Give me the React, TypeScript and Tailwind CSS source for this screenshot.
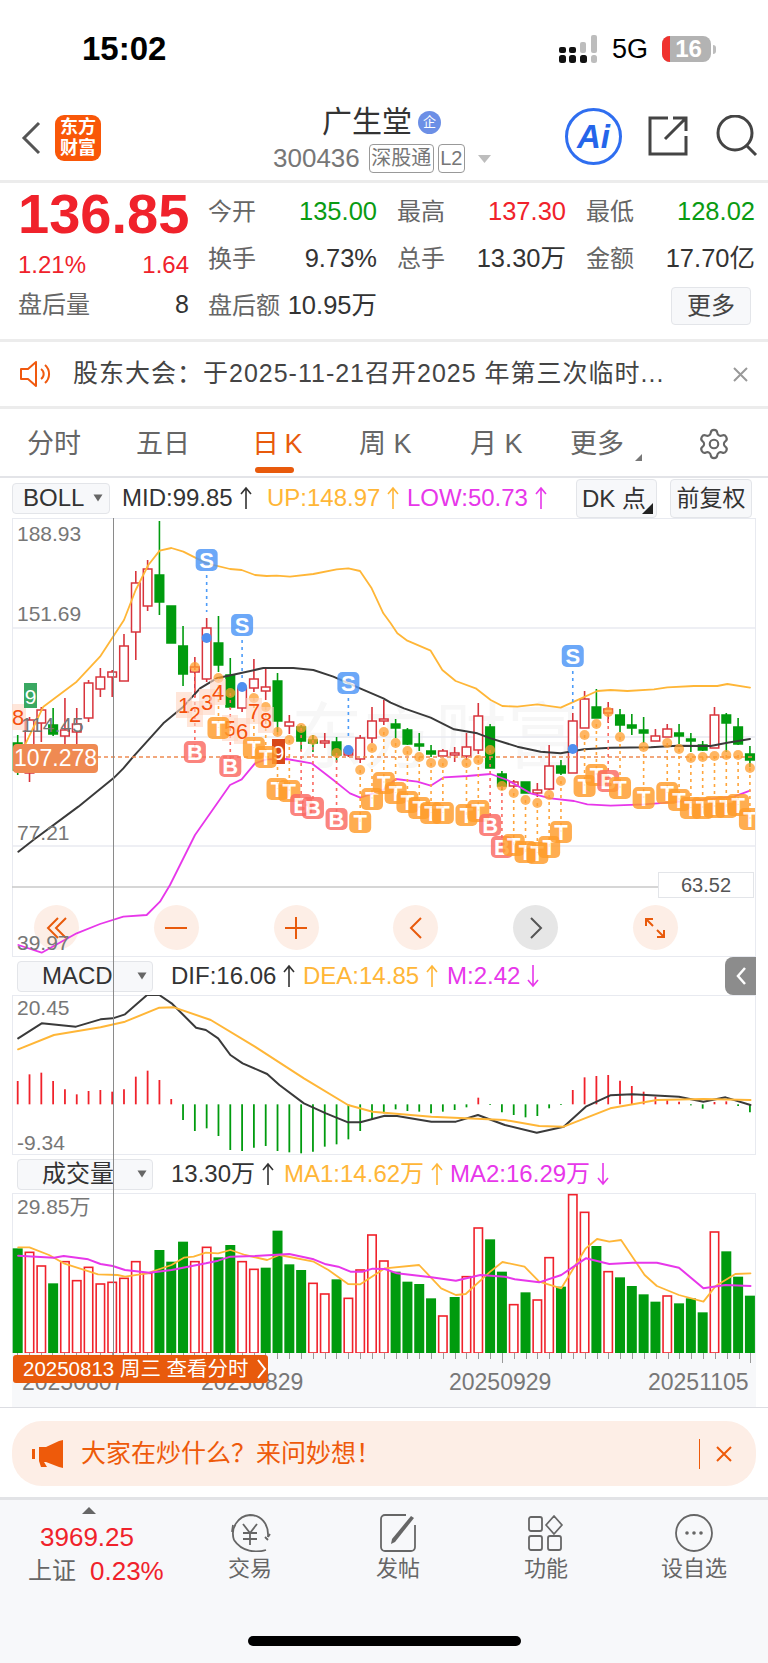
import React from 'react';
import { Settings } from 'lucide-react';

type Pt = number[];

// [red?, high, bodyTop, bodyBottom, low] in page pixels
const candles: number[][] = [
  [0, 735, 743, 770, 775], [1, 717, 720, 773, 782], [1, 707, 710, 723, 742], [0, 708, 725, 734, 736],
  [1, 698, 730, 736, 748], [1, 708, 724, 732, 760], [1, 680, 683, 718, 722], [1, 668, 677, 689, 697],
  [1, 670, 672, 677, 697], [1, 634, 646, 681, 681], [1, 571, 583, 632, 660], [1, 560, 569, 606, 611],
  [0, 521, 575, 602, 615], [0, 606, 606, 643, 643], [0, 626, 646, 674, 686], [1, 657, 667, 672, 697],
  [1, 618, 628, 679, 682], [0, 616, 643, 665, 672], [0, 658, 675, 707, 709], [1, 687, 688, 708, 712],
  [1, 659, 679, 688, 692], [1, 669, 687, 691, 700], [0, 673, 681, 721, 732], [1, 715, 722, 726, 734],
  [0, 725, 727, 741, 751], [0, 735, 740, 743, 752], [1, 733, 741, 742, 748], [0, 737, 742, 755, 762],
  [1, 747, 750, 755, 757], [1, 735, 738, 759, 763], [1, 707, 721, 738, 743], [1, 700, 719, 721, 725],
  [0, 719, 724, 728, 738], [0, 728, 730, 744, 745], [0, 733, 744, 746, 751], [0, 745, 751, 754, 757],
  [1, 749, 751, 756, 757], [1, 747, 753, 755, 762], [1, 733, 747, 756, 760], [1, 703, 716, 750, 754],
  [0, 724, 727, 768, 768], [0, 771, 774, 786, 790], [1, 780, 782, 786, 788], [0, 782, 782, 793, 793],
  [1, 783, 790, 793, 797], [1, 745, 766, 789, 790], [0, 760, 766, 773, 775], [1, 713, 721, 773, 773],
  [1, 691, 699, 728, 728], [0, 689, 707, 718, 718], [1, 702, 709, 713, 723], [0, 709, 715, 725, 732],
  [0, 714, 725, 728, 735], [0, 717, 730, 733, 743], [1, 729, 736, 741, 741], [1, 724, 729, 737, 737],
  [0, 724, 733, 736, 744], [0, 733, 739, 741, 752], [0, 741, 745, 750, 751], [1, 707, 715, 748, 748],
  [0, 713, 715, 723, 752], [0, 718, 727, 744, 745], [0, 746, 754, 760, 767],
];

const tMarks: number[][] = [
  [17, 678, 728], [20, 698, 748], [21, 707, 757], [22, 732, 789], [23, 740, 791], [29, 770, 822], [30, 748, 799],
  [31, 732, 783], [32, 743, 793], [33, 751, 802], [34, 757, 808], [35, 763, 813], [36, 763, 813], [38, 763, 815],
  [39, 760, 811], [42, 793, 845], [43, 800, 852], [44, 803, 853], [45, 795, 847], [46, 781, 832], [48, 735, 786],
  [49, 724, 775], [51, 737, 788], [53, 747, 798], [55, 743, 793], [56, 749, 800], [57, 758, 808], [58, 757, 808],
  [59, 756, 807], [60, 755, 807], [61, 755, 805], [62, 768, 819],
];
const bMarks: number[][] = [
  [15, 667, 752], [18, 693, 766], [24, 728, 805], [25, 740, 808], [27, 753, 819], [40, 750, 825], [41, 786, 847], [50, 712, 781],
];
// [index, dotY, badgeY, dashEnd]
const sMarks: number[][] = [
  [16, 638, 560, 612], [19, 687, 625, 680], [28, 750, 683, 737], [47, 749, 656, 710],
];
// [label, x, y]
const tdNums: (string | number)[][] = [
  ['8', 18, 717], ['1', 184, 705], ['2', 195, 714], ['3', 207, 702], ['4', 218, 692],
  ['5', 230, 728], ['6', 242, 731], ['7', 254, 711], ['8', 266, 720],
];

const upLine = [
  ...z3([[70, 715], [130, 590], [230, 515], [300, 440], [372, 330], [407, 240], [445, 165], [479, 122], [514, 114], [550, 125], [620, 160], [690, 177], [725, 180], [765, 195], [800, 198], [830, 197], [870, 200], [940, 192], [1010, 178], [1045, 175], [1080, 183], [1115, 235], [1150, 310]]),
  ...z4([[20, 10], [40, 40], [70, 62], [140, 92], [175, 150], [215, 183], [275, 205], [320, 240], [355, 258], [400, 260], [460, 253], [530, 263], [570, 245], [640, 213], [680, 210], [730, 213], [810, 208], [850, 202], [930, 198], [1000, 198], [1030, 192], [1098, 203]]),
];
const midLine = [
  ...z5([[55, 455], [100, 420], [235, 320], [340, 235], [370, 205], [400, 170], [490, 70], [550, 20]]),
  ...z3([[600, 535], [650, 505], [720, 490], [790, 474], [880, 474], [940, 480], [1000, 500], [1080, 535], [1150, 565]]),
  ...z4([[20, 248], [60, 265], [140, 293], [210, 328], [280, 340], [320, 355], [400, 380], [470, 395], [530, 400], [600, 388], [680, 383], [800, 382], [880, 377], [980, 378], [1030, 368], [1098, 357]]),
];
const lowLine = [
  ...z5([[55, 735], [125, 758], [230, 700], [300, 672], [370, 650], [440, 645], [480, 605], [510, 555], [585, 405], [690, 255], [725, 238], [765, 190], [800, 178], [860, 177], [935, 190], [1000, 240], [1050, 280], [1081, 293], [1150, 270]]),
  ...z4([[35, 477], [100, 485], [140, 497], [180, 472], [250, 468], [320, 462], [370, 480], [440, 520], [500, 535], [570, 543], [610, 553], [680, 557], [780, 553], [850, 548], [1050, 530], [1098, 512]]),
];

const difLine = z67(950, [[37, 265], [85, 220], [155, 230], [205, 208], [230, 205], [255, 193], [300, 135], [325, 135], [350, 160], [400, 233], [420, 240], [445, 265], [470, 315], [495, 340], [545, 372], [570, 405], [620, 460], [665, 490], [710, 517], [735, 517], [785, 497], [810, 498], [880, 515], [930, 515], [975, 495], [1030, 525], [1095, 548], [1150, 530], [1195, 470], [1245, 436], [1290, 433], [1385, 440], [1435, 455], [1480, 442], [1531, 465]]);
const deaLine = z67(950, [[37, 298], [110, 255], [205, 232], [255, 215], [325, 173], [355, 172], [430, 210], [520, 290], [620, 385], [710, 465], [760, 485], [880, 500], [1030, 510], [1100, 528], [1150, 530], [1245, 475], [1340, 450], [1435, 447], [1531, 450]]);
const hist = [393, 373, 368, 393, 418, 433, 423, 420, 425, 418, 380, 362, 390, 447, 510, 543, 535, 558, 600, 603, 593, 588, 603, 607, 610, 605, 590, 583, 568, 543, 510, 490, 478, 483, 485, 490, 485, 480, 472, 443, 465, 487, 495, 502, 498, 475, 465, 420, 382, 378, 375, 392, 408, 425, 440, 450, 455, 466, 476, 456, 454, 468, 487];

// [red?, top in zoom y]
const vols: number[][] = [
  [0, 265], [1, 277], [1, 318], [0, 370], [1, 305], [1, 362], [1, 322], [1, 372], [1, 367], [1, 355], [1, 305], [1, 340], [0, 270], [0, 305], [0, 245], [1, 305], [1, 262], [0, 292], [0, 255], [1, 305], [1, 328],
  [0, 323], [0, 212], [0, 313], [0, 330], [1, 370], [1, 402], [0, 358], [1, 415], [1, 330], [1, 225], [1, 303], [0, 335], [0, 365], [0, 372], [0, 415], [1, 468], [0, 411], [1, 350], [1, 204], [0, 238], [0, 335],
  [1, 434], [0, 397], [1, 420], [1, 293], [0, 380], [1, 104], [1, 157], [0, 258], [1, 335], [0, 352], [0, 378], [0, 403], [0, 425], [1, 408], [0, 430], [0, 415], [0, 457], [1, 216], [0, 274], [0, 350], [0, 407],
];
const ma1Line = z67(1160, [[37, 262], [60, 262], [100, 285], [130, 310], [200, 343], [240, 345], [255, 350], [300, 340], [350, 315], [375, 293], [395, 290], [420, 278], [445, 280], [470, 270], [500, 285], [545, 300], [570, 285], [640, 305], [670, 330], [710, 372], [735, 373], [785, 325], [855, 315], [900, 385], [930, 405], [950, 402], [1000, 335], [1025, 306], [1070, 320], [1100, 365], [1145, 385], [1195, 265], [1218, 237], [1243, 245], [1267, 240], [1315, 345], [1340, 378], [1385, 405], [1435, 425], [1460, 378], [1500, 342], [1531, 340]]);
const ma2Line = z67(1160, [[37, 287], [110, 293], [130, 288], [180, 298], [205, 312], [230, 318], [255, 330], [305, 338], [350, 330], [420, 310], [445, 302], [470, 290], [520, 288], [590, 282], [640, 298], [665, 313], [690, 320], [715, 335], [740, 335], [760, 326], [785, 327], [810, 340], [880, 352], [930, 362], [980, 345], [1030, 350], [1050, 358], [1100, 367], [1145, 345], [1195, 295], [1243, 312], [1290, 308], [1340, 308], [1385, 323], [1435, 385], [1480, 375], [1531, 378]]);

function z3(p: Pt[]) { return p.map(([x, y]) => [x / 3, 510 + y / 3]); }
function z4(p: Pt[]) { return p.map(([x, y]) => [384 + x / 3, 620 + y / 3]); }
function z5(p: Pt[]) { return p.map(([x, y]) => [x / 3, 700 + y / 3]); }
function z67(base: number, p: Pt[]) { return p.map(([x, y]) => [x / 2.04, base + y / 3]); }

const xOf = (i: number) => 17.7 + i * 11.81;
const RED = '#f0222b';
const GREEN = '#009b0e';
const ORANGE = '#ffb637';
const PINK = '#e737ea';

const Line = ({ pts, color, w = 1.8 }: { pts: number[][]; color: string; w?: number }) => (
  <polyline points={pts.map((p) => p.join(',')).join(' ')} fill="none" stroke={color} strokeWidth={w} strokeLinejoin="round" strokeLinecap="round" />
);

const Badge = ({ x, y, label, color }: { x: number; y: number; label: string; color: string }) => (
  <g opacity={0.82}>
    <rect x={x - 11} y={y - 11} width={22} height={22} rx={5} fill={color} />
    <text x={x} y={y + 8} textAnchor="middle" fontSize={22} fontWeight={700} fill="#fff">{label}</text>
  </g>
);

const Caret = () => (
  <svg width="10" height="8" viewBox="0 0 10 8"><path d="M0.5 0.5h9L5 7.5z" fill="#666" /></svg>
);

const CornerMark = ({ size, color, className }: { size: number; color: string; className: string }) => (
  <svg width={size} height={size} viewBox="0 0 10 10" className={className}><path d="M10 0v10H0z" fill={color} /></svg>
);

// tall thin trend arrow next to an indicator value
const Trend = ({ color, down }: { color: string; down?: boolean }) => (
  <svg width="12" height="24" viewBox="0 0 12 24" className="ml-[7px] shrink-0">
    <path d={down ? 'M6 1v21M1 16l5 6 5-6' : 'M6 23V2M1 8l5-6 5 6'} fill="none" stroke={color} strokeWidth="1.6" />
  </svg>
);

const Legend = ({ text, color, width, down }: { text: string; color: string; width: string; down?: boolean }) => (
  <div className={`flex items-center whitespace-nowrap ${width}`} style={{ color }}>
    <span>{text}</span>
    <Trend color={color} down={down} />
  </div>
);

const KChart = () => (
  <svg viewBox="12 518 743 439" className="absolute -left-px -top-px w-[743px] h-[439px]">
    {[628, 737, 846].map((y) => (
      <line key={y} x1={12} x2={755} y1={y} y2={y} stroke="#e8eaf0" strokeWidth={1.5} />
    ))}
    <line x1={12} x2={658} y1={887} y2={887} stroke="#c9c9c9" strokeWidth={1.5} />
    {candles.map(([red, h, t, b, l], i) => (
      <g key={i}>
        <line x1={xOf(i)} x2={xOf(i)} y1={h} y2={l} stroke={red ? '#d8343c' : GREEN} strokeWidth={1.6} />
        <rect x={xOf(i) - 4.3} y={t} width={8.6} height={Math.max(b - t, 2)} fill={red ? '#fff' : GREEN} stroke={red ? '#d8343c' : GREEN} strokeWidth={1.5} />
      </g>
    ))}
    <Line pts={upLine} color={ORANGE} />
    <Line pts={midLine} color="#3a3a3a" w={2} />
    <Line pts={lowLine} color={PINK} />
    <line x1={97} x2={755} y1={757} y2={757} stroke="#ee8a52" strokeWidth={1.5} strokeDasharray="4 3" />
    {bMarks.map(([i, d, b]) => (
      <line key={i} x1={xOf(i)} x2={xOf(i)} y1={d} y2={b} stroke="#fb6a62" strokeWidth={1.6} strokeDasharray="3 4" />
    ))}
    {tMarks.map(([i, d, b]) => (
      <line key={i} x1={xOf(i)} x2={xOf(i)} y1={d} y2={b} stroke="#ffa53c" strokeWidth={1.6} strokeDasharray="3 4" />
    ))}
    {sMarks.map(([i, , b, e]) => (
      <line key={i} x1={xOf(i)} x2={xOf(i)} y1={b + 15} y2={e} stroke="#4d9cf8" strokeWidth={1.6} strokeDasharray="3 4" />
    ))}
    {[...tMarks, ...bMarks].map(([i, d]) => (
      <circle key={i} cx={xOf(i)} cy={d} r={5} fill="#ff9d2e" opacity={0.75} />
    ))}
    {sMarks.map(([i, d]) => (
      <circle key={i} cx={xOf(i)} cy={d} r={5} fill="#4f8ff0" />
    ))}
    {tdNums.map(([n, x, y], k) => (
      <g key={k}>
        <rect x={Number(x) - 8} y={Number(y) - 13} width={16} height={26} fill="#ffd5c2" opacity={0.6} />
        <text x={Number(x)} y={Number(y) + 8} textAnchor="middle" fontSize={22} fill="#f5500d">{n}</text>
      </g>
    ))}
    <rect x={24} y={683} width={13} height={25} fill="#3aa862" />
    <text x={30.5} y={704} textAnchor="middle" fontSize={21} fill="#fff">9</text>
    <rect x={272} y={739} width={13} height={25} fill="#d8481a" />
    <text x={278.5} y={760} textAnchor="middle" fontSize={21} fill="#fff">9</text>
    {[...bMarks.map((m) => ({ i: m[0], y: m[2], l: 'B', c: '#fb6a62' })), ...tMarks.map((m) => ({ i: m[0], y: m[2], l: 'T', c: '#ff9c2a' }))]
      .sort((a, b) => a.i - b.i)
      .map((m) => (
        <Badge key={m.i} x={xOf(m.i)} y={m.y} label={m.l} color={m.c} />
      ))}
    {sMarks.map(([i, , b]) => (
      <Badge key={i} x={xOf(i)} y={b} label="S" color="#4d96f7" />
    ))}
  </svg>
);

const MacdChart = () => (
  <svg viewBox="12 995 743 160" className="absolute -left-px -top-px w-[743px] h-[160px]">
    {hist.map((v, i) => {
      const y = 950 + v / 3;
      const base = 950 + 463 / 3;
      return <line key={i} x1={xOf(i)} x2={xOf(i)} y1={y} y2={base} stroke={v < 463 ? RED : GREEN} strokeWidth={1.8} />;
    })}
    <Line pts={difLine} color="#3a3a3a" w={2} />
    <Line pts={deaLine} color={ORANGE} w={2} />
  </svg>
);

const VolChart = () => (
  <svg viewBox="12 1193 743 160" className="absolute -left-px -top-px w-[743px] h-[160px]">
    {vols.map(([red, t], i) => {
      const y = 1160 + t / 3;
      return red ? (
        <rect key={i} x={xOf(i) - 4.2} y={y} width={8.4} height={1353 - y} fill="#fff" stroke={RED} strokeWidth={1.6} />
      ) : (
        <rect key={i} x={xOf(i) - 5} y={y} width={10} height={1353 - y} fill={GREEN} />
      );
    })}
    <Line pts={ma1Line} color={ORANGE} />
    <Line pts={ma2Line} color={PINK} w={2} />
  </svg>
);

const Circle = ({ grey, children }: { grey?: boolean; children: React.ReactNode }) => (
  <div className={`w-[45px] h-[45px] rounded-full flex items-center justify-center ${grey ? 'bg-[#e6e6e6]' : 'bg-[#fdeee6]'}`}>
    {children}
  </div>
);

const Stat = ({ label, value, color }: { label: string; value: string; color: string }) => (
  <div className="flex justify-between items-center h-[47px]">
    <span className="text-[24px] text-[#666]">{label}</span>
    <span className={`text-[25.5px] ${color}`}>{value}</span>
  </div>
);

const FootItem = ({ icon, label }: { icon: React.ReactNode; label: string }) => (
  <div className="flex flex-col items-center w-[148px]">
    <div className="h-[40px] flex items-center">{icon}</div>
    <span className="text-[22px] text-[#666] mt-[1px] leading-[30px]">{label}</span>
  </div>
);

export default function App() {
  const axisTicks = vols.map((_, i) => i);
  return (
    <div className="relative w-[768px] h-[1663px] bg-white overflow-hidden flex flex-col font-['Liberation_Sans','Noto_Sans_CJK_SC',sans-serif]">
      {/* status bar */}
      <div className="h-[100px] flex items-center justify-between pl-[82px] pr-[52px] pb-[2px]">
        <span className="text-[33px] font-semibold text-black">15:02</span>
        <div className="flex items-center">
          <svg width="39" height="28" viewBox="0 0 39 28">
            <rect x="0" y="12" width="7" height="6" rx="2" fill="#111" />
            <rect x="0" y="20" width="7" height="8" rx="2.5" fill="#111" />
            <rect x="10" y="12" width="7" height="6" rx="2" fill="#111" />
            <rect x="10" y="20" width="7" height="8" rx="2.5" fill="#111" />
            <rect x="21" y="7" width="6" height="11" rx="2" fill="#bdbdbd" />
            <rect x="21" y="20" width="7" height="8" rx="2.5" fill="#111" />
            <rect x="32" y="0" width="6" height="18" rx="2" fill="#bdbdbd" />
            <rect x="32" y="20" width="6" height="8" rx="2.5" fill="#bdbdbd" />
          </svg>
          <span className="text-[27px] text-black ml-[14px] mr-[14px]">5G</span>
          <div className="relative w-[49px] h-[26px] rounded-[8px] bg-[#b3b3b3] overflow-hidden flex items-center justify-center">
            <div className="absolute left-0 top-0 bottom-0 w-[8px] bg-[#f0322e]" />
            <span className="relative text-[24px] font-bold text-white leading-none pl-[4px]">16</span>
          </div>
          <div className="w-[3px] h-[9px] rounded-r-full bg-[#bdbdbd] ml-[2px]" />
        </div>
      </div>

      {/* header */}
      <div className="relative h-[83px] border-b-[3px] border-[#ececec] flex items-center">
        <svg width="20" height="34" viewBox="0 0 20 34" className="ml-[21px] mb-[4px]">
          <path d="M18 2L3 17l15 15" fill="none" stroke="#555" strokeWidth="3" />
        </svg>
        <div className="ml-[14px] mb-[4px] w-[46px] h-[46px] rounded-[9px] bg-[#f95708] flex flex-col items-center justify-center text-white font-bold text-[18px] leading-[21px]">
          <span>东方</span>
          <span>财富</span>
        </div>
        <div className="absolute left-[273px] top-[6px] flex flex-col">
          <div className="flex items-center ml-[49px]">
            <span className="text-[30px] leading-[32px] text-[#333]">广生堂</span>
            <span className="ml-[6px] w-[23px] h-[23px] rounded-full bg-[#6c8fe6] text-white text-[13px] flex items-center justify-center">企</span>
          </div>
          <div className="flex items-center mt-[6px]">
            <span className="text-[26px] leading-[29px] text-[#777]">300436</span>
            <span className="ml-[9px] h-[29px] w-[65px] rounded-[4px] border border-[#999] text-[20px] leading-[27px] text-center text-[#777]">深股通</span>
            <span className="ml-[4px] h-[29px] w-[27px] rounded-[4px] border border-[#999] text-[20px] leading-[27px] text-center text-[#777]">L2</span>
            <svg width="13" height="8" viewBox="0 0 13 8" className="ml-[13px]"><path d="M0 0h13L6.5 8z" fill="#bdbdbd" /></svg>
          </div>
        </div>
        <div className="absolute left-[565px] top-[8px] w-[57px] h-[57px] rounded-full border-[3px] border-[#2f6ef0] flex items-center justify-center text-[#2565ea] text-[33px] font-bold italic">Ai</div>
        <svg width="40" height="40" viewBox="0 0 40 40" className="absolute left-[648px] top-[16px]">
          <path d="M20 2H2v36h36V20" fill="none" stroke="#444" strokeWidth="3" />
          <path d="M17 23L38 2M25 2h13v13" fill="none" stroke="#444" strokeWidth="3" />
        </svg>
        <svg width="42" height="42" viewBox="0 0 42 42" className="absolute left-[716px] top-[15px]">
          <circle cx="19" cy="18" r="17" fill="none" stroke="#444" strokeWidth="3" />
          <path d="M31 31l9 9" stroke="#444" strokeWidth="3" />
        </svg>
      </div>

      {/* quote */}
      <div className="h-[159px] border-b-[3px] border-[#ececec] flex pl-[18px] pr-[13px]">
        <div className="w-[171px] flex flex-col">
          <div className="h-[62px] text-[56px] leading-[62px] font-bold text-[#f0222b] whitespace-nowrap">136.85</div>
          <div className="h-[40px] flex items-center justify-between text-[24px] text-[#f0222b]">
            <span>1.21%</span>
            <span>1.64</span>
          </div>
          <div className="h-[40px] flex items-center justify-between text-[24px] text-[#666]">
            <span>盘后量</span>
            <span className="text-[25px] text-[#333]">8</span>
          </div>
        </div>
        <div className="ml-[19px] flex-1 grid grid-cols-3 gap-x-[20px] content-start pt-[5px]">
          <Stat label="今开" value="135.00" color="text-[#0a9b13]" />
          <Stat label="最高" value="137.30" color="text-[#f0222b]" />
          <Stat label="最低" value="128.02" color="text-[#0a9b13]" />
          <Stat label="换手" value="9.73%" color="text-[#333]" />
          <Stat label="总手" value="13.30万" color="text-[#333]" />
          <Stat label="金额" value="17.70亿" color="text-[#333]" />
          <Stat label="盘后额" value="10.95万" color="text-[#333]" />
          <div />
          <div className="flex justify-end pr-[4px] items-center h-[47px]">
            <div className="w-[80px] h-[38px] rounded-[4px] bg-[#f7f8fa] border border-[#e3e5e9] text-[24px] text-[#444] flex items-center justify-center">更多</div>
          </div>
        </div>
      </div>

      {/* notice */}
      <div className="h-[67px] border-b-[3px] border-[#ececec] flex items-center pl-[20px] pr-[20px]">
        <svg width="33" height="28" viewBox="0 0 33 28">
          <path d="M1 9h7l8-7v24l-8-7H1z" fill="none" stroke="#f0590f" strokeWidth="2" strokeLinejoin="round" />
          <path d="M21 9a6 6 0 010 10M25 5a12 12 0 010 18" fill="none" stroke="#f0590f" strokeWidth="2" />
        </svg>
        <span className="ml-[20px] text-[25px] tracking-[1px] text-[#444] whitespace-nowrap">股东大会：于2025-11-21召开2025 年第三次临时...</span>
        <svg width="15" height="15" viewBox="0 0 15 15" className="ml-auto"><path d="M1 1l13 13M14 1L1 14" stroke="#999" strokeWidth="2" /></svg>
      </div>

      {/* period tabs */}
      <div className="relative h-[69px] border-b-2 border-[#e3e4e8] grid grid-cols-[109px_116px_107px_111px_100px_127px_auto] items-center pl-[27px] text-[27px] text-[#666] pt-[3px]">
        <span>分时</span>
        <span>五日</span>
        <span className="text-[#e85a0c]">日{'\u2009'}K</span>
        <span>周 K</span>
        <span>月 K</span>
        <span className="relative">
          更多
          <CornerMark size={7} color="#777" className="absolute left-[65px] bottom-[3px]" />
        </span>
        <Settings size={34} strokeWidth={1.5} className="text-[#666]" />
        <div className="absolute left-[255px] top-[58px] w-[39px] h-[6px] rounded-full bg-[#e85a0c]" />
      </div>

      {/* BOLL legend */}
      <div className="relative h-[40px] flex items-center pl-[12px] text-[24px]">
        <div className="w-[98px] h-[31px] rounded-[4px] bg-[#f7f8fa] border border-[#e3e5e9] flex items-center justify-between pl-[10px] pr-[6px] text-[#333]">
          <span>BOLL</span>
          <Caret />
        </div>
        <div className="ml-[12px] flex">
          <Legend text="MID:99.85" color="#333333" width="w-[145px]" />
          <Legend text="UP:148.97" color="#ffb637" width="w-[140px]" />
          <Legend text="LOW:50.73" color="#e737ea" width="w-[140px]" />
        </div>
        <div className="absolute left-[576px] top-[1px] w-[81px] h-[39px] rounded-[4px] bg-[#f7f8fa] border border-[#e3e5e9] flex items-center pl-[5px] text-[24px] text-[#333]">
          DK 点
          <CornerMark size={11} color="#222" className="absolute right-[3px] bottom-[3px]" />
        </div>
        <div className="absolute left-[670px] top-[1px] w-[82px] h-[39px] rounded-[4px] bg-[#f7f8fa] border border-[#e3e5e9] flex items-center justify-center text-[23px] text-[#333]">前复权</div>
      </div>

      {/* K line chart */}
      <div className="relative mx-[12px] h-[439px] border border-[#e8eaf0] text-[21px] text-[#777]">
        <div className="absolute left-[278px] top-[182px] text-[72px] leading-none text-[#f7f7f7] whitespace-nowrap">东方财富</div>
        {/* the band lines run over these zoom buttons */}
        <div className="absolute left-[21px] top-[386px] w-[644px] flex justify-between">
          <Circle>
            <svg width="24" height="24" viewBox="0 0 24 24"><path d="M13 2L3 12l10 10M21 2L11 12l10 10" fill="none" stroke="#e85a0c" strokeWidth="2" /></svg>
          </Circle>
          <Circle>
            <svg width="22" height="4" viewBox="0 0 22 4"><path d="M0 2h22" stroke="#e85a0c" strokeWidth="2" /></svg>
          </Circle>
          <Circle>
            <svg width="22" height="22" viewBox="0 0 22 22"><path d="M0 11h22M11 0v22" stroke="#e85a0c" strokeWidth="2" /></svg>
          </Circle>
          <Circle>
            <svg width="14" height="22" viewBox="0 0 14 22"><path d="M12 1L2 11l10 10" fill="none" stroke="#e85a0c" strokeWidth="2" /></svg>
          </Circle>
          <Circle grey>
            <svg width="14" height="22" viewBox="0 0 14 22"><path d="M2 1l10 10L2 21" fill="none" stroke="#555" strokeWidth="2" /></svg>
          </Circle>
          <Circle>
            <svg width="24" height="24" viewBox="0 0 24 24"><path d="M3 10V3h7M3 3l7 7M21 14v7h-7M21 21l-7-7" fill="none" stroke="#e85a0c" strokeWidth="2" /></svg>
          </Circle>
        </div>
        <KChart />
        <span className="absolute left-[4px] top-[-1px]">188.93</span>
        <span className="absolute left-[4px] top-[79px]">151.69</span>
        <span className="absolute left-[8px] top-[190px]">114.45</span>
        <span className="absolute left-[4px] top-[298px]">77.21</span>
        <span className="absolute left-[4px] top-[408px]">39.97</span>
        <div className="absolute left-0 top-[225px] w-[85px] h-[29px] rounded-[4px] bg-[#ef8a52] text-white text-[23px] flex items-center justify-center">107.278</div>
        <div className="absolute left-[645px] top-[353px] w-[96px] h-[26px] bg-white border border-[#e3e5e9] text-[20px] text-[#555] flex items-center justify-center">63.52</div>
      </div>

      {/* MACD legend */}
      <div className="relative h-[38px] flex items-center pl-[17px] text-[24px]">
        <div className="w-[136px] h-[31px] rounded-[4px] bg-[#f7f8fa] border border-[#e3e5e9] flex items-center justify-between pl-[24px] pr-[5px] text-[#333]">
          <span>MACD</span>
          <Caret />
        </div>
        <div className="ml-[18px] flex">
          <Legend text="DIF:16.06" color="#333333" width="w-[132px]" />
          <Legend text="DEA:14.85" color="#ffb637" width="w-[144px]" />
          <Legend text="M:2.42" color="#e737ea" width="w-[100px]" down />
        </div>
        <div className="absolute left-[725px] top-0 w-[31px] h-[38px] rounded-l-[8px] bg-[#8c8c8c] flex items-center justify-center">
          <svg width="12" height="20" viewBox="0 0 12 20"><path d="M10 2L3 10l7 8" fill="none" stroke="#fff" strokeWidth="2.5" /></svg>
        </div>
      </div>

      {/* MACD chart */}
      <div className="relative mx-[12px] h-[160px] border border-[#e8eaf0] text-[21px] text-[#777]">
        <MacdChart />
        <span className="absolute left-[4px] top-[-4px]">20.45</span>
        <span className="absolute left-[4px] top-[131px]">-9.34</span>
      </div>

      {/* volume legend */}
      <div className="h-[38px] flex items-center pl-[17px] text-[24px]">
        <div className="w-[136px] h-[31px] rounded-[4px] bg-[#f7f8fa] border border-[#e3e5e9] flex items-center justify-between pl-[24px] pr-[5px] text-[#333]">
          <span>成交量</span>
          <Caret />
        </div>
        <div className="ml-[18px] flex">
          <Legend text="13.30万" color="#333333" width="w-[113px]" />
          <Legend text="MA1:14.62万" color="#ffb637" width="w-[166px]" />
          <Legend text="MA2:16.29万" color="#e737ea" width="w-[170px]" down />
        </div>
      </div>

      {/* volume chart */}
      <div className="relative mx-[12px] h-[160px] border-x border-t border-[#e8eaf0] text-[21px] text-[#777]">
        <VolChart />
        <span className="absolute left-[4px] top-[-3px]">29.85万</span>
      </div>

      {/* date axis */}
      <div className="relative mx-[12px] h-[54px] bg-[#f7f8fa] text-[23px] text-[#777]">
        <div className="absolute left-[5px] right-[4px] top-0 flex justify-between">
          {axisTicks.map((i) => (
            <div key={i} className={`w-px bg-[#999] ${i === 41 || i === 62 ? 'h-[10px]' : 'h-[6px]'}`} />
          ))}
        </div>
        <span className="absolute left-[10px] top-[12px]">20250807</span>
        <span className="absolute left-[189px] top-[12px]">20250829</span>
        <span className="absolute left-[437px] top-[12px]">20250929</span>
        <span className="absolute left-[636px] top-[12px]">20251105</span>
      </div>

      <div className="absolute left-[13px] top-[1355px] w-[255px] h-[28px] rounded-[3px] bg-[#e85a0c] text-white text-[20.5px] flex items-center pl-[10px] whitespace-nowrap">
        20250813 周三 查看分时
        <svg width="11" height="22" viewBox="0 0 11 22" className="ml-[7px]"><path d="M2 2l7 9-7 9" fill="none" stroke="#fff" strokeWidth="2" /></svg>
      </div>
      {/* crosshair */}
      <div className="absolute left-[113px] top-[518px] h-[837px] w-px bg-[#8a8a8a]" />

      <div className="h-px bg-[#dcdde2]" />

      {/* AI banner */}
      <div className="mx-[12px] mt-[13px] h-[65px] rounded-[30px] bg-[#fdeee6] flex items-center pl-[20px] pr-[24px]">
        <svg width="31" height="28" viewBox="0 0 31 28">
          <path d="M31 0v28l-4-1-13-5h-2l3 5H9l-2-6V7l7 0L27 1z" fill="#ee5a0a" />
          <rect x="0" y="9" width="3" height="10" fill="#ee5a0a" />
        </svg>
        <span className="ml-[18px] text-[25px] text-[#ee5a0a] whitespace-nowrap">大家在炒什么？来问妙想！</span>
        <div className="ml-auto w-px h-[30px] bg-[#ee5a0a]" />
        <svg width="16" height="16" viewBox="0 0 16 16" className="ml-[16px]"><path d="M1 1l14 14M15 1L1 15" stroke="#ee5a0a" strokeWidth="2" /></svg>
      </div>

      {/* bottom bar */}
      <div className="relative mt-[11px] flex-1 bg-[#f7f8fa] border-t-[3px] border-[#e2e3e6]">
        <div className="absolute left-[82px] top-[7px] w-0 h-0 border-x-[7px] border-x-transparent border-b-[7px] border-b-[#666]" />
        <div className="absolute left-[40px] top-[22px] text-[26px] leading-[30px] text-[#f0222b]">3969.25</div>
        <div className="absolute left-[28px] top-[56px] flex items-center whitespace-nowrap">
          <span className="text-[24px] leading-[30px] text-[#666]">上证</span>
          <span className="ml-[14px] text-[26px] leading-[30px] text-[#f0222b]">0.23%</span>
        </div>
        <div className="absolute left-[176px] top-[13px] flex">
          <FootItem
            label="交易"
            icon={
              <svg width="44" height="38" viewBox="0 0 44 38" fill="none" stroke="#666" strokeWidth="1.8">
                <path d="M6 26C2 14 10 2 22 1c11 0 19 9 18 22M38 36C28 39 14 38 6 26" />
                <path d="M5 11l-1 7M40 23l2-3M40 26l-3-3" />
                <path d="M15 10l7 9 7-9M22 19v12M15 19h14M15 25h14" />
              </svg>
            }
          />
          <FootItem
            label="发帖"
            icon={
              <svg width="38" height="38" viewBox="0 0 38 38" fill="none" stroke="#666" strokeWidth="1.8">
                <path d="M27 1H6a4 4 0 00-4 4v28a4 4 0 004 4h26a4 4 0 004-4V11" />
                <path d="M13 25L32 2l3 2-19 24-4 2z" fill="#666" stroke="none" />
              </svg>
            }
          />
          <FootItem
            label="功能"
            icon={
              <svg width="36" height="36" viewBox="0 0 36 36" fill="none" stroke="#666" strokeWidth="1.8">
                <rect x="1" y="2" width="13" height="14" rx="2" />
                <rect x="1" y="21" width="13" height="14" rx="2" />
                <rect x="20" y="21" width="13" height="14" rx="2" />
                <path d="M26 1l8 9-8 9-8-9z" strokeLinejoin="round" />
              </svg>
            }
          />
          <FootItem
            label="设自选"
            icon={
              <svg width="38" height="38" viewBox="0 0 38 38">
                <ellipse cx="19" cy="19" rx="18" ry="18" fill="none" stroke="#666" strokeWidth="1.8" />
                <circle cx="12" cy="19" r="1.8" fill="#666" />
                <circle cx="19" cy="19" r="1.8" fill="#666" />
                <circle cx="26" cy="19" r="1.8" fill="#666" />
              </svg>
            }
          />
        </div>
        <div className="absolute left-[248px] top-[136px] w-[273px] h-[10px] rounded-full bg-black" />
      </div>
    </div>
  );
}
